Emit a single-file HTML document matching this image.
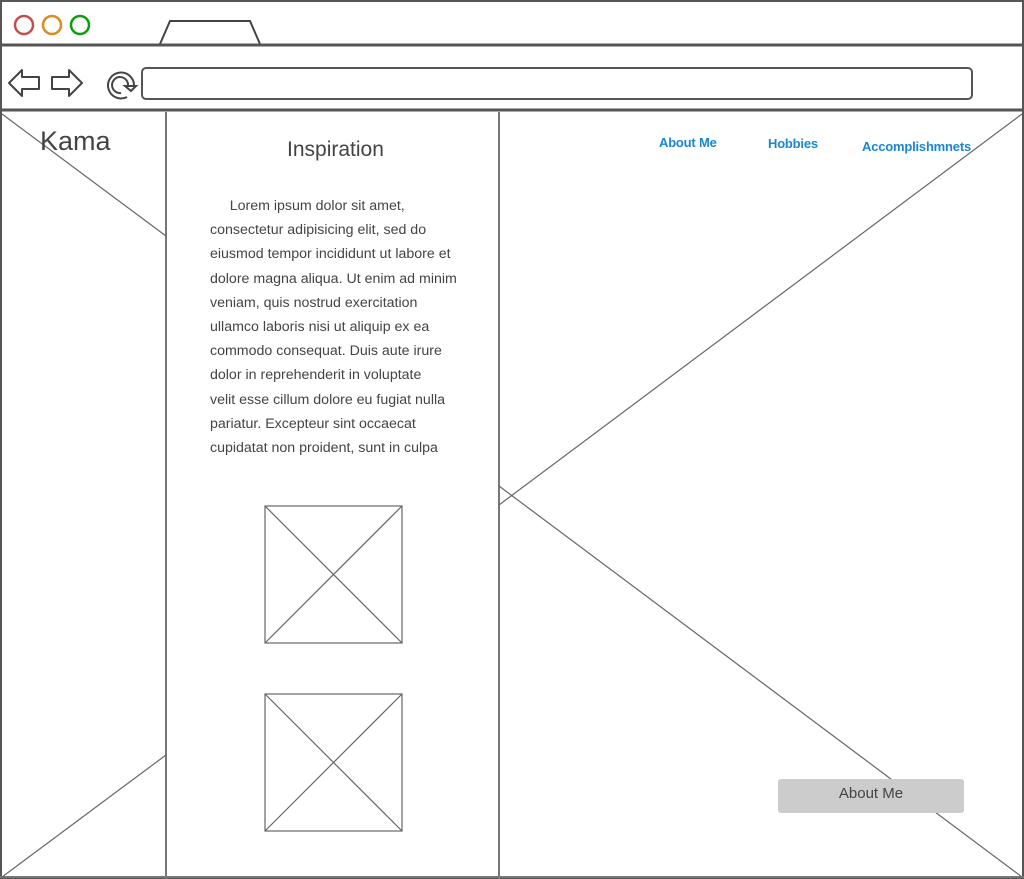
<!DOCTYPE html>
<html><head><meta charset="utf-8"><style>
html,body{margin:0;padding:0;background:#fff;}
body{width:1024px;height:879px;position:relative;overflow:hidden;font-family:"Comic Sans MS","Liberation Sans",sans-serif;color:#444;}
svg{position:absolute;left:0;top:0;}
.t{position:absolute;white-space:nowrap;}
.nav{color:#1a86d0;font-size:13px;font-weight:bold;letter-spacing:-0.2px;}
.p{position:absolute;left:210px;top:194px;width:260px;font-size:14.2px;line-height:24.2px;color:#444;white-space:nowrap;}
</style></head><body>
<svg width="1024" height="879" viewBox="0 0 1024 879">
<rect x="1" y="1" width="1022" height="877" fill="none" stroke="#555" stroke-width="2"/>
<circle cx="24" cy="25" r="9" fill="none" stroke="#c0504d" stroke-width="2.5"/>
<circle cx="52" cy="25" r="9" fill="none" stroke="#e08a1e" stroke-width="2.5"/>
<circle cx="80" cy="25" r="9" fill="none" stroke="#0a9e0a" stroke-width="2.5"/>
<path d="M160 44 L170 21 L250 21 L260 44" fill="none" stroke="#444" stroke-width="2"/>
<line x1="0" y1="45" x2="1024" y2="45" stroke="#555" stroke-width="3"/>
<path d="M9 83 L22 70 L22 77 L39 77 L39 89 L22 89 L22 96 Z" fill="none" stroke="#444" stroke-width="2" stroke-linejoin="round"/>
<path d="M82 83 L69 70 L69 77 L52 77 L52 89 L69 89 L69 96 Z" fill="none" stroke="#444" stroke-width="2" stroke-linejoin="round"/>
<path d="M127 97 A13 13 0 1 1 134 86 M121 93 A8 8 0 1 1 128 86 M125 86 L136 86 L131 91 Z" fill="none" stroke="#444" stroke-width="2"/>
<rect x="142" y="68" width="830" height="31" rx="4" fill="none" stroke="#555" stroke-width="2"/>
<line x1="0" y1="110" x2="1024" y2="110" stroke="#555" stroke-width="3"/>
<g stroke="#777" stroke-width="2" fill="none">
<line x1="166" y1="112" x2="166" y2="879"/>
<line x1="499" y1="112" x2="499" y2="879"/>
<line x1="0" y1="877" x2="1024" y2="877"/>
</g>
<g stroke="#666" stroke-width="1.2" fill="none">
<line x1="2" y1="114" x2="166" y2="236"/>
<line x1="2" y1="877" x2="166" y2="755"/>
<line x1="1022" y1="114" x2="499" y2="505"/>
<line x1="499" y1="486" x2="1022" y2="877"/>
<rect x="265" y="506" width="137" height="137"/>
<line x1="265" y1="506" x2="402" y2="643"/><line x1="402" y1="506" x2="265" y2="643"/>
<rect x="265" y="694" width="137" height="137"/>
<line x1="265" y1="694" x2="402" y2="831"/><line x1="402" y1="694" x2="265" y2="831"/>
</g>
<rect x="778" y="779" width="186" height="34" rx="3" fill="#cccccc"/>
</svg>
<div class="t" style="left:40px;top:126px;font-size:27px;color:#444;">Kama</div>
<div class="t" style="left:287px;top:138px;font-size:21px;">Inspiration</div>
<div class="p">&nbsp;&nbsp;&nbsp;&nbsp;&nbsp;Lorem ipsum dolor sit amet,<br>consectetur adipisicing elit, sed do<br>eiusmod tempor incididunt ut labore et<br>dolore magna aliqua. Ut enim ad minim<br>veniam, quis nostrud exercitation<br>ullamco laboris nisi ut aliquip ex ea<br>commodo consequat. Duis aute irure<br>dolor in reprehenderit in voluptate<br>velit esse cillum dolore eu fugiat nulla<br>pariatur. Excepteur sint occaecat<br>cupidatat non proident, sunt in culpa</div>
<div class="t nav" style="left:659px;top:135px;">About Me</div>
<div class="t nav" style="left:768px;top:136px;">Hobbies</div>
<div class="t nav" style="left:862px;top:139px;">Accomplishmnets</div>
<div class="t" style="left:778px;top:785px;width:186px;text-align:center;font-size:15px;color:#444;">About Me</div>
</body></html>
